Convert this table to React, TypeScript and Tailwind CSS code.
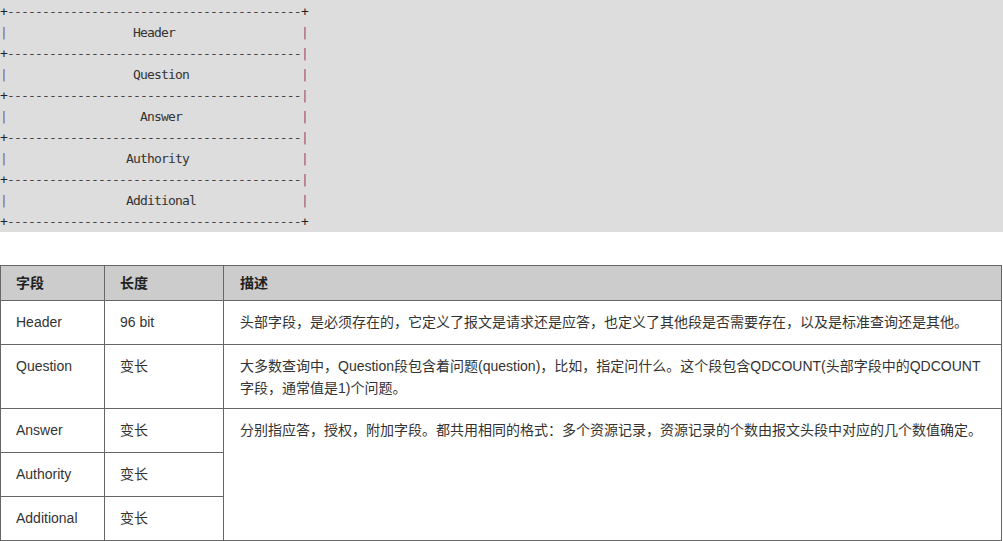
import type { ReactNode } from 'react';

const mono = { fontFamily: '"DejaVu Sans Mono", "Liberation Mono", monospace' };
const sans = { fontFamily: '"Liberation Sans", Arial, "Noto Sans CJK SC", sans-serif' };

const WIDTH = 44;
const sections: { label: string; at: number }[] = [
  { label: 'Header', at: 19 },
  { label: 'Question', at: 19 },
  { label: 'Answer', at: 20 },
  { label: 'Authority', at: 18 },
  { label: 'Additional', at: 18 },
];

const Plus = () => <span className="text-[#22222a]">+</span>;
const Pipe = () => <span className="text-[#7d5a82]">|</span>;
const Dashes = () => <span className="text-[#444]">{'-'.repeat(WIDTH - 2)}</span>;

function Line({ children }: { children: ReactNode }) {
  return <div className="h-[21px] leading-[21px] whitespace-pre">{children}</div>;
}

function Diagram() {
  const lines: ReactNode[] = [];
  lines.push(
    <Line key="top">
      <Plus />
      <Dashes />
      <Plus />
    </Line>
  );
  sections.forEach((s, i) => {
    const left = ' '.repeat(s.at - 1);
    const right = ' '.repeat(WIDTH - 2 - (s.at - 1) - s.label.length);
    lines.push(
      <Line key={s.label}>
        <Pipe />
        <span className="text-[#333]">{left + s.label + right}</span>
        <Pipe />
      </Line>
    );
    const last = i === sections.length - 1;
    lines.push(
      <Line key={s.label + '-sep'}>
        <Plus />
        <Dashes />
        {last ? <Plus /> : <Pipe />}
      </Line>
    );
  });
  return (
    <pre className="bg-[#dddddd] w-full pt-px text-[13px] tracking-[-0.83px]" style={mono}>
      {lines}
    </pre>
  );
}

const rows = [
  { field: 'Header', len: '96 bit', desc: '头部字段，是必须存在的，它定义了报文是请求还是应答，也定义了其他段是否需要存在，以及是标准查询还是其他。', span: 1, tight: false },
  { field: 'Question', len: '变长', desc: '大多数查询中，Question段包含着问题(question)，比如，指定问什么。这个段包含QDCOUNT(头部字段中的QDCOUNT字段，通常值是1)个问题。', span: 1, tight: true },
  { field: 'Answer', len: '变长', desc: '分别指应答，授权，附加字段。都共用相同的格式：多个资源记录，资源记录的个数由报文头段中对应的几个数值确定。', span: 3, tight: false },
  { field: 'Authority', len: '变长', desc: null, span: 0, tight: false },
  { field: 'Additional', len: '变长', desc: null, span: 0, tight: false },
];

export default function App() {
  return (
    <div className="w-[1003px] h-[541px] bg-white overflow-hidden">
      <Diagram />

      <table className="mt-[33px] w-[1002px] border-collapse text-[14px] leading-[22px] text-[#333]" style={sans}>
        <thead>
          <tr className="bg-[#cccccc]">
            <th className="w-[104px] border border-[#666] px-[15px] py-[6px] text-left font-bold text-[#222]">字段</th>
            <th className="w-[119px] border border-[#666] px-[15px] py-[6px] text-left font-bold text-[#222]">长度</th>
            <th className="border border-[#666] px-[16px] py-[6px] text-left font-bold text-[#222]">描述</th>
          </tr>
        </thead>
        <tbody>
          {rows.map((r) => {
            const pad = r.tight ? 'pt-[10px] pb-[9px]' : 'py-[10px]';
            return (
              <tr key={r.field} className={r.tight ? '' : 'h-[44px]'}>
                <td className={`border border-[#666] px-[15px] ${pad} align-top`}>{r.field}</td>
                <td className={`border border-[#666] px-[15px] ${pad} align-top`}>{r.len}</td>
                {r.span > 0 && (
                  <td rowSpan={r.span} className={`border border-[#666] px-[16px] ${pad} align-top`}>
                    {r.desc}
                  </td>
                )}
              </tr>
            );
          })}
        </tbody>
      </table>
    </div>
  );
}
